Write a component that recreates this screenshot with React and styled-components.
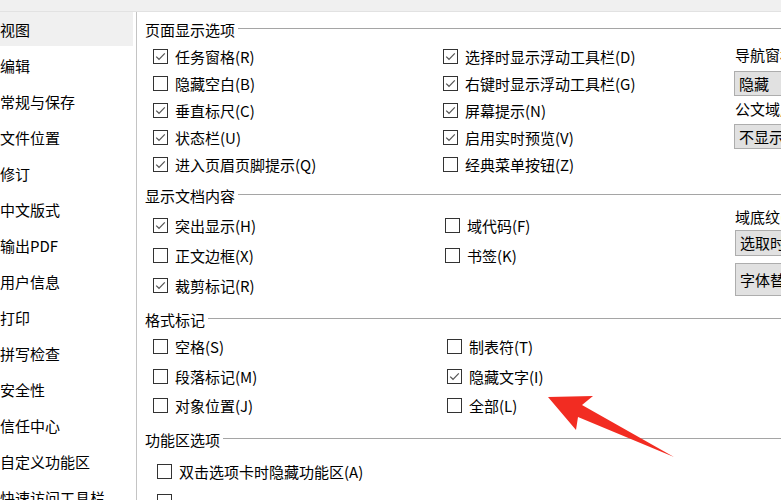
import React from 'react';
import styled, { createGlobalStyle } from 'styled-components';

const Global = createGlobalStyle`
  html, body { margin: 0; padding: 0; background: #fff; overflow: hidden; }
  body { font-family: "Noto Sans CJK SC", "Noto Sans", sans-serif; color: #000; }
`;

const Frame = styled.div`
  position: relative;
  width: 781px;
  height: 500px;
  overflow: hidden;
  display: flex;
  flex-direction: column;
  background: #fff;
`;

const TopBar = styled.div`
  height: 11px;
  flex-shrink: 0;
  background: #f0f0f0;
  border-bottom: 1px solid #e2e2e2;
`;

const Body = styled.div`
  flex: 1;
  display: flex;
  min-height: 0;
`;

const Sidebar = styled.nav`
  width: 136px;
  flex-shrink: 0;
  border-right: 1px solid #c4c4c4;
  display: flex;
  flex-direction: column;
  gap: 2px;
  overflow: hidden;
`;

const NavItem = styled.div`
  height: 34px;
  line-height: 35px;
  margin-right: 3px;
  font-size: 15px;
  white-space: nowrap;
  flex-shrink: 0;
  background: ${p => (p.$active ? '#f0f0f0' : 'transparent')};
`;

const Main = styled.main`
  flex: 1;
  min-width: 0;
  padding: 7px 0 0 8px;
  display: flex;
  flex-direction: column;
  overflow: hidden;
`;

const SectionHeader = styled.div`
  display: flex;
  align-items: center;
  height: 22px;
  font-size: 15px;
  white-space: nowrap;
  margin-top: ${p => p.$mt || 0}px;
  &::after {
    content: '';
    flex: 1;
    height: 1px;
    margin-left: 3px;
    background: #a5a5a5;
    transform: translateY(-1px);
  }
`;

const OptionGrid = styled.div`
  display: grid;
  grid-template-columns: ${p => p.$cols};
  padding-left: ${p => p.$indent}px;
  margin-top: ${p => p.$mt}px;
`;

const Column = styled.div`
  display: flex;
  flex-direction: column;
  min-width: 0;
`;

const OptionRow = styled.label`
  display: flex;
  align-items: center;
  height: ${p => p.$h}px;
  font-size: 15px;
  white-space: nowrap;
`;

const Box = styled.span`
  width: 15px;
  height: 15px;
  box-sizing: border-box;
  border: 1px solid #333;
  background: #fff;
  margin-right: 7px;
  flex-shrink: 0;
  display: flex;
  align-items: center;
  justify-content: center;
`;

const FieldLabel = styled.div`
  height: ${p => p.$h}px;
  line-height: ${p => p.$h}px;
  margin-top: ${p => p.$mt || 0}px;
  font-size: 15px;
  white-space: nowrap;
`;

const GrayBox = styled.div`
  width: 110px;
  height: ${p => p.$h}px;
  margin-top: ${p => p.$mt}px;
  margin-left: ${p => p.$ml || 0}px;
  box-sizing: border-box;
  border: 1px solid #adadad;
  background: #e1e1e1;
  padding-left: 4px;
  font-size: 15px;
  line-height: ${p => p.$h - 2}px;
  white-space: nowrap;
`;

const ArrowLayer = styled.svg`
  position: absolute;
  left: 0;
  top: 0;
  pointer-events: none;
`;

const Check = () => (
  <svg width="13" height="13" viewBox="0 0 13 13">
    <polyline points="2.2,6.6 5,9.3 10.8,3.3" fill="none" stroke="#555" strokeWidth="1.2" />
  </svg>
);

const Option = ({ checked, h, children }) => (
  <OptionRow $h={h}>
    <Box>{checked && <Check />}</Box>
    {children}
  </OptionRow>
);

const navItems = ['视图', '编辑', '常规与保存', '文件位置', '修订', '中文版式', '输出PDF', '用户信息', '打印', '拼写检查', '安全性', '信任中心', '自定义功能区', '快速访问工具栏'];

export default function App() {
  return (
    <Frame>
      <Global />
      <TopBar />
      <Body>
        <Sidebar>
          {navItems.map((n, i) => (
            <NavItem key={n} $active={i === 0}>{n}</NavItem>
          ))}
        </Sidebar>
        <Main>
          <SectionHeader>页面显示选项</SectionHeader>
          <OptionGrid $cols="290px 292px 1fr" $indent={8} $mt={2.5}>
            <Column>
              <Option h={27} checked>任务窗格(R)</Option>
              <Option h={27}>隐藏空白(B)</Option>
              <Option h={27} checked>垂直标尺(C)</Option>
              <Option h={27} checked>状态栏(U)</Option>
              <Option h={27} checked>进入页眉页脚提示(Q)</Option>
            </Column>
            <Column>
              <Option h={27} checked>选择时显示浮动工具栏(D)</Option>
              <Option h={27} checked>右键时显示浮动工具栏(G)</Option>
              <Option h={27} checked>屏幕提示(N)</Option>
              <Option h={27} checked>启用实时预览(V)</Option>
              <Option h={27}>经典菜单按钮(Z)</Option>
            </Column>
            <Column>
              <FieldLabel $h={23}>导航窗格(P)</FieldLabel>
              <GrayBox $h={25} $mt={5.5} $ml={-1}>隐藏</GrayBox>
              <FieldLabel $h={26}>公文域底纹</FieldLabel>
              <GrayBox $h={25} $mt={2} $ml={-1}>不显示</GrayBox>
            </Column>
          </OptionGrid>

          <SectionHeader $mt={7.5}>显示文档内容</SectionHeader>
          <OptionGrid $cols="292px 290px 1fr" $indent={8} $mt={4}>
            <Column>
              <Option h={30} checked>突出显示(H)</Option>
              <Option h={30}>正文边框(X)</Option>
              <Option h={30} checked>裁剪标记(R)</Option>
            </Column>
            <Column>
              <Option h={30}>域代码(F)</Option>
              <Option h={30}>书签(K)</Option>
            </Column>
            <Column>
              <FieldLabel $h={20} $mt={-3}>域底纹(E)</FieldLabel>
              <GrayBox $h={26} $mt={3}>选取时显示</GrayBox>
              <GrayBox $h={33} $mt={7}>字体替换...</GrayBox>
            </Column>
          </OptionGrid>

          <SectionHeader $mt={9}>格式标记</SectionHeader>
          <OptionGrid $cols="294px 1fr" $indent={8} $mt={2}>
            <Column>
              <Option h={29.5}>空格(S)</Option>
              <Option h={29.5}>段落标记(M)</Option>
              <Option h={29.5}>对象位置(J)</Option>
            </Column>
            <Column>
              <Option h={29.5}>制表符(T)</Option>
              <Option h={29.5} checked>隐藏文字(I)</Option>
              <Option h={29.5}>全部(L)</Option>
            </Column>
          </OptionGrid>

          <SectionHeader $mt={8.5}>功能区选项</SectionHeader>
          <OptionGrid $cols="1fr" $indent={12} $mt={6}>
            <Column>
              <Option h={30}>双击选项卡时隐藏功能区(A)</Option>
              <Option h={30}></Option>
            </Column>
          </OptionGrid>
        </Main>
      </Body>
      <ArrowLayer width="781" height="500" viewBox="0 0 781 500">
        <polygon points="548,397 593,396 582,405 674,457 578,417 576,430" fill="#f22c22" />
      </ArrowLayer>
    </Frame>
  );
}
